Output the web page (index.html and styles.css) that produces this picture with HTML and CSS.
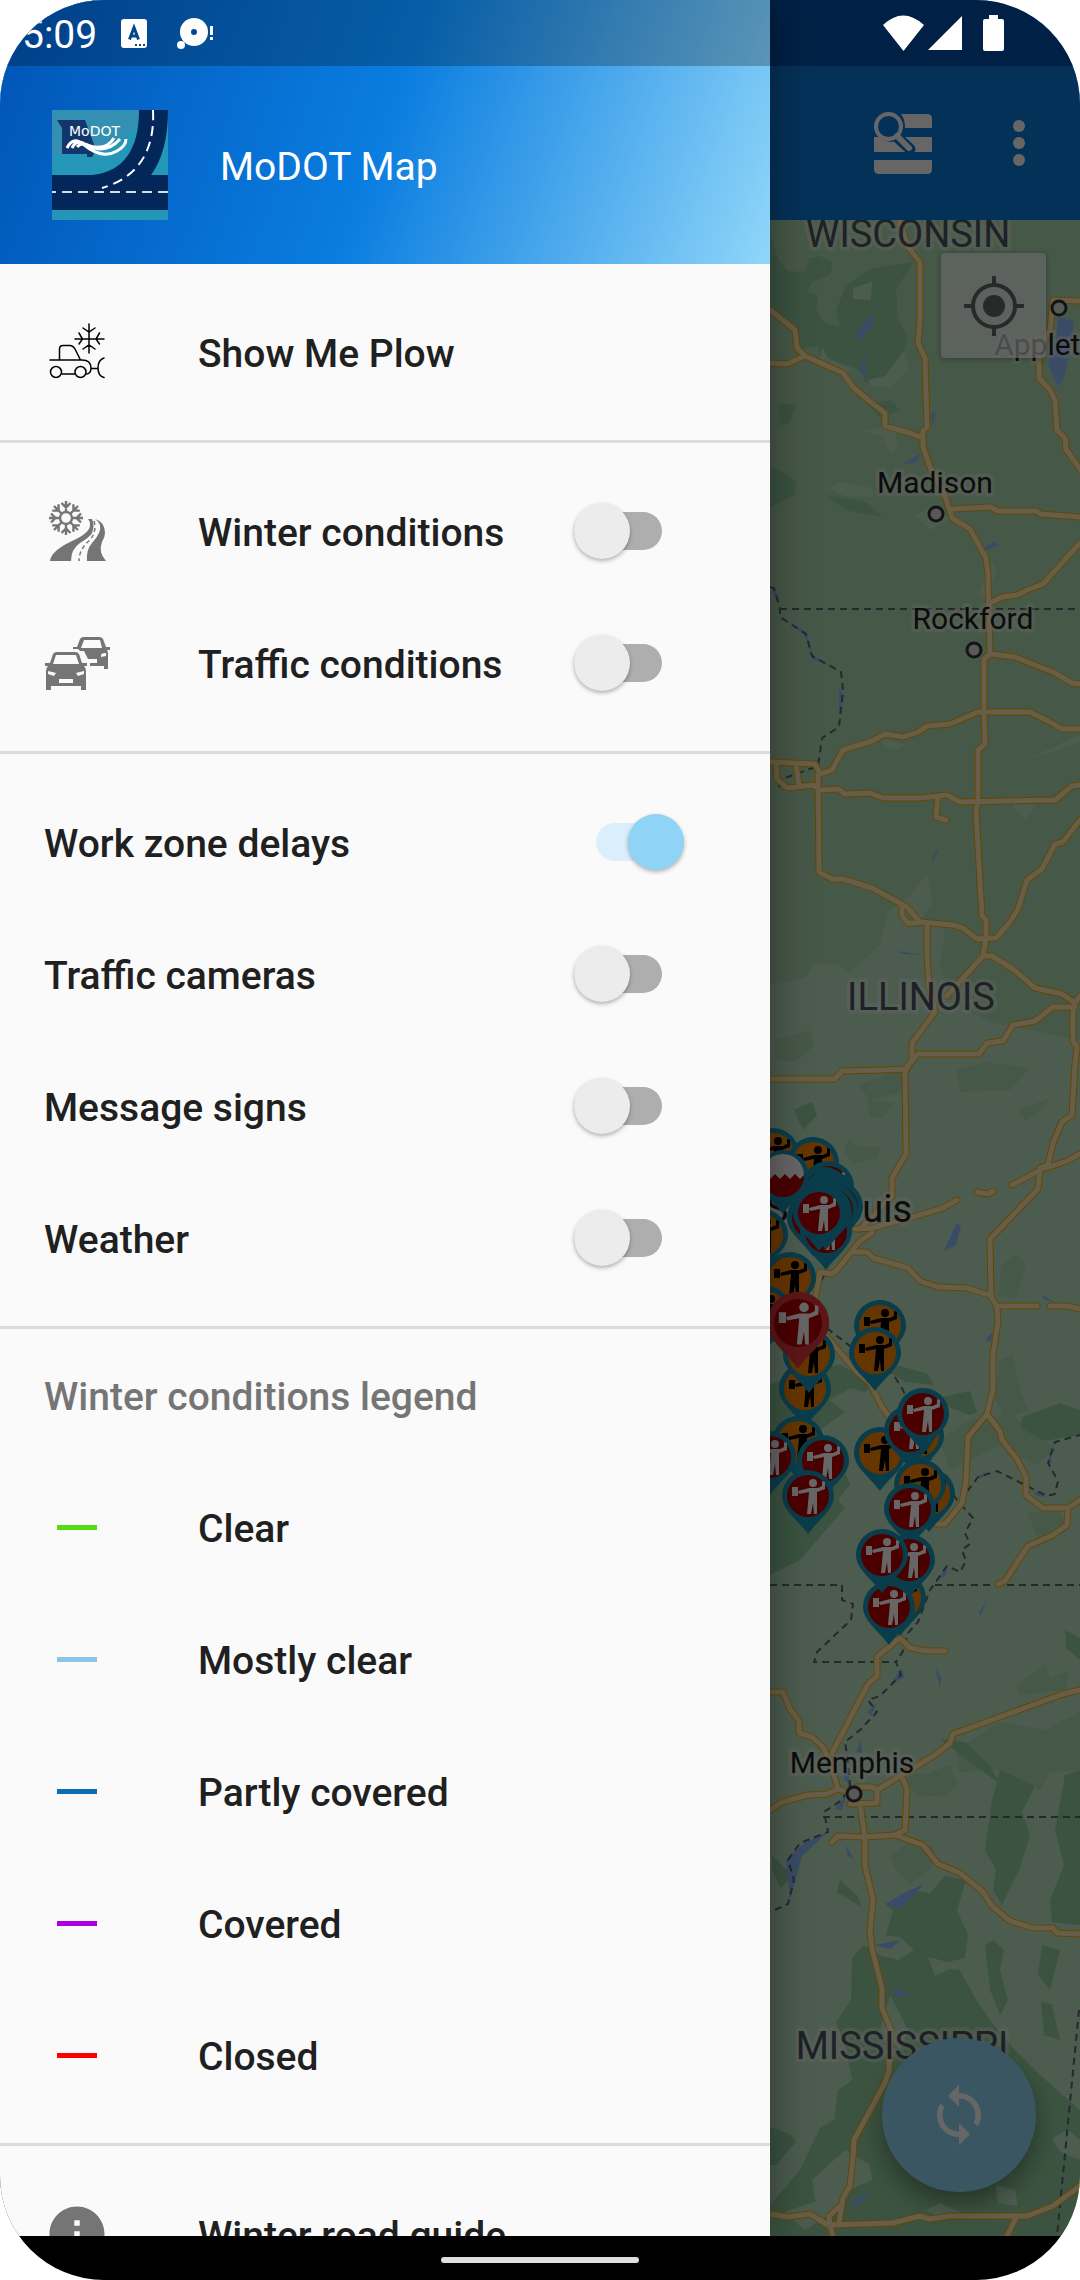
FILE: index.html
```html
<!DOCTYPE html>
<html lang="en">
<head>
  <meta charset="UTF-8">
  <meta name="viewport" content="width=device-width, initial-scale=1.0">
  <title>MoDOT Map</title>
  <link rel="stylesheet" href="styles.css">
</head>
<body>
<div class="screen">
  <div class="status-bar">
    <span class="clock">5:09</span>
    <svg class="status-left" width="96" height="36" viewBox="0 0 96 36" aria-hidden="true">
      <rect x="0" y="4" width="26" height="29" rx="3" fill="#fff"/>
      <path d="M8.500 24.500L13 12.500L17.500 24.500M10 21H16" fill="none" stroke="#03488c" stroke-width="3"/>
      <path d="M14 30h2m2 0h2m2 0h2" stroke="#03488c" stroke-width="2"/>
      <circle cx="73" cy="17" r="14" fill="#fff"/>
      <circle cx="73" cy="17" r="3" fill="#03488c"/>
      <circle cx="60" cy="30" r="4" fill="#fff"/>
      <path d="M90.500 11v9m0 2v3" stroke="#fff" stroke-width="3"/>
    </svg>
    <svg class="status-right" width="120" height="36" viewBox="0 0 120 36" aria-hidden="true">
      <path fill="#fff" d="M0 10Q20-9 41 10L20.500 36ZM45 35L79 1V35ZM106 4V0h9v4h4q2 0 2 2v28q0 2-2 2H102q-2 0-2-2V6q0-2 2-2Z"/>
    </svg>
  </div>

  <div class="app">
    <header class="app-bar">
      <button class="icon-btn" aria-label="Search the list">
        <svg width="60" height="64" viewBox="0 0 60 64">
          <path fill="#fff" d="M28 3H54q5 0 5 5v9H32Q32 8 28 3ZM1 26H8q8 8 18 3l10 12H1ZM32 26H59V41H39L31 31ZM1 49H59v9q0 5-5 5H6q-5 0-5-5Z"/>
          <path d="M24 26L37 38" stroke="#0c7add" stroke-width="11" stroke-linecap="round"/>
          <circle cx="15.500" cy="15.500" r="12.500" fill="#0c7add" stroke="#fff" stroke-width="4"/>
          <path d="M24 25L36 37" stroke="#fff" stroke-width="6" stroke-linecap="round"/>
        </svg>
      </button>
      <button class="icon-btn" aria-label="More options">
        <svg width="12" height="48" viewBox="0 0 12 48" fill="#fff"><circle cx="6" cy="7" r="6"/><circle cx="6" cy="24" r="6"/><circle cx="6" cy="41" r="6"/></svg>
      </button>
    </header>

    <main class="map-area">
      <svg class="map" viewBox="0 220 1080 2016" preserveAspectRatio="xMaxYMin slice" role="img" aria-label="Map of the Mississippi valley">
        <defs>
          <g id="worker">
            <circle cx="5" cy="-13" r="4"/>
            <path d="M-10-5L1-8H10L14-10 14-15 17-14 17-7 9-4V18H6L5 7 3 18H-1L1-4-9-2Z"/>
            <path d="M-16-9h6v9h-6Z"/>
          </g>
          <path id="drop" d="M-26 0A26 26 0 1 1 26 0C26 14 10 24 0 38C-10 24-26 14-26 0Z"/>
          <g id="pin-plain"><use href="#drop" class="pin-rim"/><circle r="21" class="pin-red"/></g>
          <g id="pin-o"><use href="#drop" class="pin-rim"/><circle r="21" class="pin-orange"/><use href="#worker" fill="#000"/></g>
          <g id="pin-r"><use href="#pin-plain"/><use href="#worker" fill="#fff"/></g>
        </defs>

        <rect y="220" width="1080" height="2016" class="land"/>
        <path class="plain" d="M770 985L806 978 812 965 835 964 850 972 880 945 888 912 910 895 928 873 933 902 920 920 945 930 940 965 952 1003 990 1022 1080 1040V2236H770Z"/>
        <path class="forest" d="M770 232L778 260 788 271 805 272 810 258 820 256 833 262 830 275 812 282 808 292 818 296 816 310 826 324 840 326 836 310 845 288 856 278 874 268 914 262 905 275 896 290 898 318 907 337 899 378 880 388 865 382 860 370 820 356 818 346 798 350 795 330 770 310Z"/>
        <path class="plain" d="M853 288L872 282 871 300 853 299ZM868 380L885 376 904 350 909 370 890 388 870 386ZM822 347L828 358 852 370 843 374 820 362ZM862 431L893 424 899 448 890 454 882 436ZM948 290L968 293 970 322 957 340 945 318Z"/>
        <path class="forest" d="M778 405L797 403 790 422 780 426ZM770 467L782 471 796 481 795 495 770 508ZM826 495L866 502 883 517 845 510ZM868 405L890 400 900 410 880 418Z"/>
        <path class="plain" d="M828 488L840 482 872 488 874 497 845 496ZM915 516L934 504 950 520 930 530ZM978 595L992 560 997 570 985 600ZM1015 796L1036 806 1026 820 1014 808ZM1030 758L1080 734V742L1050 753ZM882 739L905 744 898 750 884 747Z"/>
        <path class="land" d="M775 1040L810 1030 815 1045 795 1062 775 1060ZM858 1085L905 1068 910 1090 870 1100ZM957 1070L985 1062 1030 1068 1010 1090 960 1092ZM1018 1110L1050 1098 1042 1110 1025 1120ZM1002 1265L1016 1254 1026 1264 1015 1300 998 1295ZM1000 1360L1012 1354 1020 1390 1028 1410 1005 1420 995 1400ZM970 1420L1010 1414 1056 1450 1035 1465 1000 1445 950 1470 940 1440ZM1027 1512L1060 1512 1068 1530 1040 1545ZM1016 1685L1045 1665 1050 1678 1070 1670 1065 1690 1020 1695ZM867 1100L895 1103 882 1118 870 1116ZM844 1150L850 1138 855 1146 880 1147 877 1158 852 1163Z"/>
        <path class="forest" d="M794 1110L812 1102 817 1115 803 1130ZM770 1385L800 1370 840 1365 876 1384 865 1392 850 1388 830 1400 845 1412 820 1430 835 1450 850 1484 838 1500 845 1508 800 1560 770 1575ZM897 1365L928 1374 934 1385 905 1382 890 1372ZM942 1397L970 1391 977 1412 970 1415 946 1406ZM1022 1417L1060 1403 1080 1410V1435L1045 1441 1021 1428ZM1065 1630L1080 1638V1660L1066 1648ZM840 1880L858 1896 861 1907 837 1892ZM772 1855L785 1868 798 1873 780 1888 772 1870Z"/>
        <path class="land" d="M900 1768L925 1775 950 1765 958 1785 945 1797 915 1795ZM890 1855L910 1842 935 1848 930 1870 910 1884 895 1868ZM955 1750L1000 1722 1045 1730 1080 1712V1770L1050 1772 1040 1790 1000 1770 960 1772Z"/>
        <path class="forest" d="M940 1739L965 1742 990 1766 1000 1784 970 1762ZM1000 1770L1035 1786 1022 1812 1030 1835 1020 1868 1002 1905 993 1890 996 1870 985 1850 992 1800ZM1065 1775L1080 1770V1925L1052 1922 1050 1900 1064 1865 1055 1830Z"/>
        <path class="forest" d="M893 1910L886 1905 910 1890 930 1893 945 1876 966 1880 957 1910 968 1935 965 1958 930 1966 960 1970 975 1998 990 2020 1010 2045 1040 2075 1080 2110V2236H770V2205L800 2170 820 2128 834 2120 838 2090 852 2080 846 2050 836 2022 851 2000 852 1958 864 1945 880 1955Z"/>
        <path class="forest" d="M985 1945L993 1940 1004 1950 1000 1970 1008 2000 1000 2015 990 1990ZM1042 1945L1060 1950 1050 1990 1038 1975ZM1041 2002L1052 2004 1060 2040 1044 2035Z"/>
        <path class="plain" d="M882 1935L900 1937 914 1950 898 1960 878 1955ZM890 1995L908 2030 900 2050 880 2030ZM928 1957L940 1960 958 1965 935 1976ZM812 2180L845 2150 870 2165 872 2180 850 2190 830 2215 815 2200ZM784 2212L820 2200 830 2214 805 2230ZM926 2210L940 2203 965 2214 940 2218ZM995 2185L1015 2190 1018 2206 998 2203ZM1052 2138L1068 2130 1080 2140V2160L1060 2152Z"/>
        <path class="forest" d="M770 2127L790 2134 796 2142 776 2165H770Z"/>
        <path class="water" d="M871 314L873 325 858 342 856 333ZM865 354L866 377 859 371ZM1058 317L1074 321 1070 350 1064 378 1058 386 1048 365 1056 340ZM902 464L922 453 915 463ZM931 413L936 413 932 427ZM985 547L996 541 997 546 986 550ZM770 586L775 587 780 607ZM790 622L807 633 813 655 832 667 812 659 806 638ZM839 687L845 697 839 714ZM933 856L940 847 932 865ZM897 951L923 955 903 954ZM944 1251L956 1224 961 1225 956 1245ZM1041 1294L1055 1303 1045 1300ZM985 1340L993 1332 991 1342ZM979 1612L987 1601 980 1617ZM936 1580L949 1567 945 1576ZM935 1668L941 1677 940 1688ZM890 1684L902 1668 904 1678ZM867 1712L877 1703 871 1716ZM856 1752L861 1740 862 1753ZM846 1763L850 1785 844 1779ZM835 1809L846 1796 842 1810ZM786 1859L804 1843 828 1832 802 1856 790 1900ZM846 1845L854 1860 847 1855ZM885 1904L904 1893 924 1884 900 1909ZM875 1945L901 1940 890 1949ZM890 1996L902 1985 900 1991 913 1995ZM851 2203L872 2188 855 2208ZM978 1476L990 1471 980 1479ZM1048 1461L1053 1442 1050 1470ZM1034 1491L1047 1497 1037 1496Z"/>

        <g class="border-line">
          <path d="M780 609H1080"/>
          <path d="M770 587L774 588 780 609 780 617 806 634 812 656 841 672 843 690 839 727 822 738 818 766 785 778 778 788"/>
          <path d="M770 1585H842V1600L853 1604 851 1620 817 1652 814 1662H896"/>
          <path d="M935 1585H1080M823 1817H1080M1079 2010L1057 2236"/>
          <path d="M825 1274L813 1296 828 1329 850 1346 893 1374 903 1390 925 1450 957 1500 973 1518 965 1533 970 1544 962 1550 966 1561 960 1572 947 1566 930 1590 918 1622 908 1633 903 1651 896 1662 901 1675 880 1696 868 1700 877 1712 860 1730 845 1742 848 1762 850 1785 842 1800 824 1812 828 1832 800 1843 788 1860 794 1880 788 1904 770 1912"/>
          <path d="M960 1501L978 1477 997 1471 1047 1496 1055 1494 1058 1481 1048 1463 1055 1442 1080 1435"/>
        </g>

        <g id="roads" class="road-case">
          <path id="r" d="M898 217L908 247 920 262 920 320 918 343 925 358 927 427 923 431 923 447 930 467 945 496 952 518 970 529 986 558 988 574 990 654 984 659 984 710 985 744 978 750 978 802 976 811 982 916 986 920 986 938 983 956 947 996M770 310L795 330 797 348 805 356 843 373 853 387 868 400 885 413 885 426 910 433 923 438M770 363L787 364 805 356M1080 301L1053 300 1050 330 1039 350 1039 378 1050 390 1055 400 1057 430 1065 438 1066 449 1080 469M952 509L990 507 998 511 1037 511 1040 514 1080 517M990 603L1002 597 1017 595 1027 590 1043 584 1080 543M990 654L1015 657 1053 672 1072 683 1080 684M770 762L815 764 820 774 832 770 843 750 872 741 885 734 903 737 918 732 927 726 950 724 978 712 1030 712 1048 721 1062 729 1080 729M776 764L777 779 787 788 813 785 820 790 838 789 845 794 870 793 883 798 920 798 947 795 960 802 1055 800 1072 786 1080 785M796 764L799 786M938 796L936 817 946 820M818 774L819 872 832 879 843 879 872 888 907 907 920 922 953 925 963 928 977 939 996 938 1010 922 1018 909 1027 880 1042 869 1055 844 1063 842 1080 820M902 907L902 916 908 923 918 923M927 925L927 956 929 985 935 1012 912 1043 912 1061 905 1070 906 1154 892 1178 892 1196 860 1229M983 956L992 956 1013 969 1035 988 1062 994 1075 1003 1080 996M1075 1007L1053 1007 1035 1021 1013 1025 1003 1041 987 1043 979 1054 918 1054 907 1066M770 1079L835 1079 842 1071 883 1070 907 1069M1073 1007L1073 1041 1077 1047 1075 1065 1072 1115 1062 1122 1053 1143 1048 1165 1040 1168 1038 1189 990 1239 991 1296 997 1307 998 1322 993 1355 993 1389 987 1414 968 1437 966 1481 962 1503 945 1524 937 1524M1012 1185L1040 1170 1067 1161 1080 1154M977 1192L988 1194 993 1191M957 1200L943 1208 913 1217 873 1228 855 1229M872 1233L860 1241 837 1270 832 1274 820 1272 815 1300M853 1252L867 1252 873 1258 908 1268 920 1281 938 1287 967 1288 992 1296M997 1306H1037M1050 1306H1067L1080 1309M827 1337L857 1372 870 1383 882 1407 890 1418M987 1414L1000 1431 1002 1440 1017 1459 1026 1477 1026 1495 1043 1508 1068 1508 1080 1500M1068 1508L1067 1525 1053 1535 1028 1546 1018 1561 1005 1581 998 1584M897 1640L877 1657 877 1676 868 1684 832 1753M900 1638L910 1648 927 1651 945 1651M770 1692L783 1692 790 1709 799 1721 799 1733 812 1737 823 1747 830 1761 838 1789 855 1794M770 1810L782 1802 808 1795 827 1794 838 1789M1080 1690L1063 1694 953 1734 950 1743 935 1755 877 1790 872 1787 857 1787M877 1790L877 1803 850 1804M903 1779L907 1789 905 1830 895 1835 863 1837 838 1836 832 1842M895 1835L923 1845 938 1864 960 1873 982 1891 993 1907 1010 1921 1033 1928 1053 1928 1057 1933 1080 1934M860 1804L865 1838 865 1866 873 1899 870 1931 872 1949 882 1988 882 2008 891 2030 889 2071 885 2083 854 2140 853 2158 850 2186 843 2198 839 2223M770 2214L788 2217 810 2214 828 2225 893 2223 920 2216 930 2219 950 2216 1027 2216 1053 2206 1080 2186M1017 2216L1005 2240M840 2206L829 2216 830 2225 834 2240"/>
        </g>
        <use href="#r" class="road-fill"/>

        <g class="city-dot">
          <circle cx="1059" cy="308" r="7"/><circle cx="936" cy="514" r="7"/><circle cx="974" cy="650" r="7"/><circle cx="854" cy="1794" r="7"/>
        </g>
        <g class="state-label">
          <text x="908" y="247">WISCONSIN</text>
          <text x="921" y="1010">ILLINOIS</text>
          <text x="902" y="2059">MISSISSIPPI</text>
        </g>
        <g class="city-label">
          <text x="1054" y="355">Appleton</text>
          <text x="935" y="493">Madison</text>
          <text x="973" y="629">Rockford</text>
          <text x="852" y="1773">Memphis</text>
          <text x="839" y="1222" class="big-city">St. Louis</text>
        </g>

        <use href="#pin-o" x="773" y="1154"/>
        <use href="#pin-o" x="813" y="1163"/>
        <use href="#pin-r" x="828" y="1187"/>
        <use href="#pin-plain" x="814" y="1198"/>
        <use href="#pin-plain" x="824" y="1193"/>
        <use href="#drop" x="829" y="1196" class="pin-rim"/>
        <use href="#pin-plain" x="837" y="1207"/>
        <use href="#pin-plain" x="832" y="1210"/>
        <use href="#pin-plain" x="813" y="1218"/>
        <use href="#pin-r" x="826" y="1232"/>
        <use href="#drop" x="826" y="1212" class="pin-rim"/>
        <use href="#pin-o" x="762" y="1235"/>
        <g transform="translate(783 1176)">
          <use href="#pin-plain"/>
          <path fill="#fff" d="M-21-1A21 21 0 0 1 21-1L17 3 12-2 7 3 2-2-3 3-8-2-13 3-17-2Z"/>
        </g>
        <use href="#pin-r" x="819" y="1213"/>
        <use href="#pin-o" x="790" y="1278"/>
        <use href="#pin-o" x="766" y="1312"/>
        <use href="#pin-o" x="880" y="1326"/>
        <use href="#pin-o" x="875" y="1353"/>
        <use href="#pin-o" x="805" y="1389"/>
        <use href="#pin-o" x="809" y="1355"/>
        <g transform="translate(798 1323) scale(1.200)">
          <use href="#drop" class="pin-rim-alert"/>
          <circle r="20" class="pin-red"/>
          <use href="#worker" fill="#fff"/>
        </g>
        <use href="#pin-o" x="798" y="1442"/>
        <use href="#pin-r" x="770" y="1457"/>
        <use href="#pin-r" x="823" y="1461"/>
        <use href="#pin-r" x="808" y="1496"/>
        <use href="#pin-o" x="918" y="1436"/>
        <use href="#pin-o" x="880" y="1453"/>
        <use href="#pin-r" x="910" y="1431"/>
        <use href="#pin-r" x="923" y="1414"/>
        <use href="#pin-o" x="929" y="1494"/>
        <use href="#pin-o" x="920" y="1485"/>
        <use href="#pin-r" x="910" y="1509"/>
        <use href="#pin-o" x="900" y="1598"/>
        <use href="#pin-r" x="889" y="1607"/>
        <use href="#pin-r" x="909" y="1560"/>
        <use href="#pin-r" x="882" y="1555"/>
      </svg>

      <button class="locate" aria-label="My location">
        <svg width="60" height="60" viewBox="0 0 60 60" fill="none" stroke="#666" stroke-width="4">
          <circle cx="30" cy="30" r="21"/><circle cx="30" cy="30" r="11" fill="#666" stroke="none"/>
          <path d="M30 0V9M30 51V60M0 30H9M51 30H60"/>
        </svg>
      </button>
      <button class="fab" aria-label="Refresh">
        <svg width="66" height="66" viewBox="0 0 24 24" fill="#fff">
          <path d="M12 4V1L8 5l4 4V6c3.310 0 6 2.690 6 6 0 1.010-.25 1.970-.7 2.800l1.460 1.460C19.540 15.030 20 13.570 20 12c0-4.420-3.580-8-8-8zm0 14c-3.310 0-6-2.690-6-6 0-1.010.25-1.970.7-2.800L5.240 7.740C4.460 8.970 4 10.430 4 12c0 4.420 3.580 8 8 8v3l4-4-4-4v3z"/>
        </svg>
      </button>
    </main>

    <div class="scrim"></div>

    <nav class="drawer">
      <div class="drawer-header">
        <svg class="logo" width="116" height="110" viewBox="0 0 116 110" aria-hidden="true">
          <rect width="116" height="110" fill="#2497b8"/>
          <path fill="#3490b2" d="M0 0H87V14Q70 40 0 45Z"/>
          <path fill="#04275a" d="M87 0H116Q116 42 99 65H116V100H0V65H40Q87 60 87 0Z"/>
          <path d="M101 0Q104 62 50 78" fill="none" stroke="#fff" stroke-width="2" stroke-dasharray="10 6"/>
          <path d="M0 82H116" stroke="#d5dce8" stroke-width="2" stroke-dasharray="10 6" stroke-dashoffset="6"/>
          <path fill="#12356b" d="M5 10H33L44 40 40 47H35V44H10V18Z"/>
          <text x="17" y="26" class="logo-text">MoDOT</text>
          <path d="M15 38Q21 26 31 34Q50 50 65 41Q74 36 74 29M20 38Q25 28 34 35Q54 45 68 29M25 37Q30 31 38 36Q54 41 62 28" fill="none" stroke="#fff" stroke-width="3"/>
        </svg>
        <span>MoDOT Map</span>
      </div>

      <section class="group">
        <a class="row" href="#plow">
          <svg class="row-icon" viewBox="0 0 66 66" fill="none" stroke="#000" stroke-width="1.500" stroke-linecap="round">
            <path d="M45 5V34M31 20H60M39 9L45 13 51 9M39 30L45 26 51 30M35 14L38.500 20 35 25M55.500 14L52 20 55.500 25"/>
            <path d="M6 41H38Q47 41 47 49Q47 55 42 55M15.500 41V30Q15.500 26.500 19 26.500H26Q29 26.500 31 30L36.500 41M18 55H31M48 49.500H54M60 39Q54 41 54 49T60 58.500"/>
            <circle cx="12" cy="53" r="5.500"/><circle cx="36.500" cy="53" r="5.500"/>
          </svg>
          <span>Show Me Plow</span>
        </a>
      </section>

      <section class="group">
        <label class="row">
          <svg class="row-icon" viewBox="0 0 66 66" fill="#757575">
            <g fill="none" stroke="#757575" stroke-width="2.400">
              <circle cx="22" cy="20" r="6"/>
              <g id="arm"><path d="M22 14V3M17.500 5L22 9.500 26.500 5M22 26V37M17.500 35L22 30.500 26.500 35"/></g>
              <use href="#arm" transform="rotate(45 22 20)"/>
              <use href="#arm" transform="rotate(90 22 20)"/>
              <use href="#arm" transform="rotate(135 22 20)"/>
            </g>
            <path d="M6 63Q7 53 28 43Q46 35 46 27Q46 23 44 21H48Q51 27 48 35Q46 39 36 45Q27 51 27 63Z"/>
            <path d="M51 21Q61 24 61 35Q61 39 58 44Q54 54 62 63H43Q42 52 48 45Q58 34 56 27Q54 23 51 21Z"/>
            <path d="M50 23Q53 33 46 42Q35 51 35 63" fill="none" stroke="#757575" stroke-width="1.500" stroke-dasharray="4 3"/>
          </svg>
          <span>Winter conditions</span>
          <input type="checkbox" class="switch">
        </label>
        <label class="row">
          <svg class="row-icon" viewBox="0 0 66 66" fill="#757575" fill-rule="evenodd">
            <path d="M29 17H33L36 9Q37 7 40 7H55Q58 7 59 9L62 17H66V20H63Q64 21 64 24V39H60V36H46V33H53V29H44L40 21H36L34 19H29ZM37 18H58L56 10H40ZM57 25Q57 23 62 23V26L57 27Z"/>
            <path d="M1 33H6L9 24Q10 22 13 22H31Q34 22 35 24L38 33H43V36H40Q42 38 42 41V60H37V56H7V60H2V41Q2 38 4 36H1ZM9 34H35L32 25H12ZM4 41L12 43 10 46 4 44ZM40 41L32 43 34 46 40 44ZM15 49H29V53H15Z"/>
          </svg>
          <span>Traffic conditions</span>
          <input type="checkbox" class="switch">
        </label>
      </section>

      <section class="group">
        <label class="row row-on"><span>Work zone delays</span><input type="checkbox" class="switch" checked></label>
        <label class="row"><span>Traffic cameras</span><input type="checkbox" class="switch"></label>
        <label class="row"><span>Message signs</span><input type="checkbox" class="switch"></label>
        <label class="row"><span>Weather</span><input type="checkbox" class="switch"></label>
      </section>

      <section class="group legend">
        <h2 class="row"><span>Winter conditions legend</span></h2>
        <div class="row"><i class="swatch clear"></i><span>Clear</span></div>
        <div class="row"><i class="swatch mostly-clear"></i><span>Mostly clear</span></div>
        <div class="row"><i class="swatch partly-covered"></i><span>Partly covered</span></div>
        <div class="row"><i class="swatch covered"></i><span>Covered</span></div>
        <div class="row"><i class="swatch closed"></i><span>Closed</span></div>
      </section>

      <section class="group">
        <a class="row" href="#guide">
          <svg class="row-icon" viewBox="0 0 24 24" fill="#757575">
            <path d="M12 2C6.480 2 2 6.480 2 12s4.480 10 10 10 10-4.480 10-10S17.520 2 12 2zm1 15h-2v-6h2v6zm0-8h-2V7h2v2z"/>
          </svg>
          <span>Winter road guide</span>
        </a>
      </section>
    </nav>
  </div>

  <div class="nav-bar"><span class="pill"></span></div>
</div>
</body>
</html>
```

FILE: styles.css
```css
* {
  box-sizing: border-box;
}
body {
  margin: 0;
  background: white;
  font-family: Roboto, "Noto Sans", sans-serif;
  font-size: 39px;
  color: #202020;
}
button {
  border: none;
  padding: 0;
  background: none;
  cursor: pointer;
}
.screen {
  position: relative;
  display: flex;
  flex-direction: column;
  height: 100vh;
  border-radius: 104px;
  overflow: hidden;
}

/* system bars */
.status-bar {
  position: absolute;
  top: 0;
  left: 0;
  right: 0;
  z-index: 5;
  display: flex;
  align-items: center;
  height: 66px;
  padding: 0 77px 0 22px;
  background: rgba(0,0,0,0.25);
  color: white;
}
.clock {
  padding-top: 3px;
}
.status-left {
  margin-left: 24px;
}
.status-right {
  margin-left: auto;
  overflow: visible;
}
.nav-bar {
  display: flex;
  align-items: center;
  justify-content: center;
  height: 44px;
  background: black;
}
.pill {
  width: 198px;
  height: 6px;
  margin-top: 4px;
  border-radius: 3px;
  background: #eaeaea;
}

/* app behind the drawer */
.app {
  position: relative;
  flex: 1;
  min-height: 0;
  display: flex;
  flex-direction: column;
}
.app-bar {
  display: flex;
  align-items: center;
  justify-content: flex-end;
  gap: 80px;
  height: 220px;
  padding: 66px 55px 0 0;
  background: linear-gradient(#006ee9 66px, #0c7add 66px);
}
.icon-btn svg {
  display: block;
}
.map-area {
  position: relative;
  flex: 1;
  min-height: 0;
  overflow: hidden;
}
.map {
  display: block;
  width: 100%;
  height: 100%;
}
.locate {
  position: absolute;
  top: 33px;
  right: 34px;
  display: flex;
  align-items: center;
  justify-content: center;
  width: 105px;
  height: 105px;
  border-radius: 4px;
  background: rgba(255,255,255,0.7);
  box-shadow: 0 1px 6px rgba(0,0,0,0.3);
}
.fab {
  position: absolute;
  right: 44px;
  bottom: 44px;
  display: flex;
  align-items: center;
  justify-content: center;
  width: 154px;
  height: 154px;
  border-radius: 50%;
  background: #93d7f7;
  box-shadow: 0 12px 24px rgba(0,0,0,0.35);
}
.scrim {
  position: absolute;
  inset: 0;
  background: rgba(0,0,0,0.6);
}

/* map drawing */
.land { fill: #afdcb2; }
.plain { fill: #bee6c6; }
.forest { fill: #95d0a0; }
.water { fill: #90bcff; }
.border-line {
  fill: none;
  stroke: #5d6670;
  stroke-width: 2;
  stroke-dasharray: 7 5;
}
.road-case, .road-fill {
  fill: none;
  stroke-linecap: round;
  stroke-linejoin: round;
}
.road-case {
  stroke: #ffad00;
  stroke-width: 7;
}
/* the fill reuses the casing path, so it must win over the inherited width */
.road-fill {
  stroke: #ffebb4;
  stroke-width: 5;
}
.city-dot {
  fill: #dcdcdc;
  stroke: #333;
  stroke-width: 3;
}
.state-label, .city-label {
  text-anchor: middle;
  paint-order: stroke;
  stroke: rgba(255,255,255,0.4);
  stroke-width: 7;
  stroke-linejoin: round;
}
.state-label {
  fill: #4d535c;
  font-size: 38px;
}
.city-label {
  fill: #202020;
  font-size: 30px;
}
.big-city { font-size: 38px; }
.pin-rim { fill: #1998bb; }
.pin-rim-alert { fill: #e63840; }
.pin-red { fill: #bb0000; }
.pin-orange { fill: #ff8800; }

/* drawer */
.drawer {
  position: absolute;
  top: 0;
  bottom: 0;
  left: 0;
  width: 770px;
  max-width: 72%;
  overflow: hidden;
  background: #fafafa;
  box-shadow: 0 0 40px rgba(0,0,0,0.4);
}
.drawer-header {
  display: flex;
  align-items: center;
  gap: 52px;
  height: 264px;
  padding: 66px 52px 0;
  background: linear-gradient(110deg, #0054b6, #0a7de0 50%, #90d6f9);
  color: white;
}
.logo-text {
  fill: white;
  font-family: "DejaVu Sans", sans-serif;
  font-size: 14px;
}
.group {
  padding: 22px 0;
  border-bottom: 3px solid #dcdcdc;
  font-weight: 500;
}
.legend {
  padding-top: 0;
}
.row {
  display: flex;
  align-items: center;
  height: 132px;
  margin: 0;
  padding: 0 108px 0 44px;
  color: inherit;
  text-decoration: none;
}
.row-on {
  padding-right: 86px;
}
.row span, .drawer-header span {
  padding-top: 3px;
  white-space: nowrap;
}
h2.row {
  font-size: 39px;
  font-weight: 500;
  color: #757575;
}
.row-icon {
  flex: none;
  width: 66px;
  height: 66px;
  margin-right: 88px;
}
.switch {
  flex: none;
  appearance: none;
  width: 88px;
  height: 38px;
  margin: 0 0 0 auto;
  border-radius: 19px;
  background: #aeaeae;
}
.switch::before {
  content: "";
  display: block;
  width: 56px;
  height: 56px;
  margin-top: -9px;
  border-radius: 50%;
  background: #ececec;
  box-shadow: 0 2px 4px rgba(0,0,0,0.3);
}
.switch:checked {
  background: #daeffb;
}
.switch:checked::before {
  margin-left: 32px;
  background: #8fd3f6;
}
.swatch {
  width: 40px;
  height: 5px;
  margin: 0 101px 0 13px;
}
.clear { background: #55dd11; }
.mostly-clear { background: #8ec4e8; }
.partly-covered { background: #0c6cb3; }
.covered { background: #aa00dd; }
.closed { background: #ff0000; }
```
